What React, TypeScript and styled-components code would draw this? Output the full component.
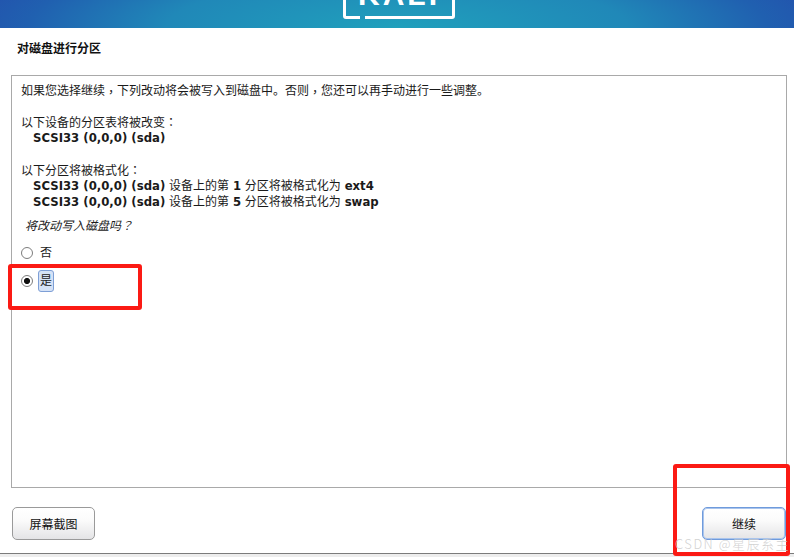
import styled, { createGlobalStyle } from "styled-components";

const GlobalStyle = createGlobalStyle`
  html, body {
    margin: 0;
    padding: 0;
    background: #fff;
  }
  body {
    font-family: "DejaVu Sans", "Noto Sans CJK SC", sans-serif;
    font-size: 12px;
    color: #1a1a1a;
  }
`;

const Page = styled.div`
  position: relative;
  width: 794px;
  height: 557px;
  overflow: hidden;
  display: flex;
  flex-direction: column;
  background: #fff;
`;

const Banner = styled.header`
  flex: none;
  height: 28px;
  display: flex;
  justify-content: center;
  align-items: flex-end;
  overflow: hidden;
  background: radial-gradient(ellipse 420px 90px at 50% 100%, #20a0bc 0%, #2088b8 55%, #2060b0 88%, #2256ae 100%);
`;

const LogoFrame = styled.div`
  position: relative;
  width: 112px;
  height: 40px;
  flex: none;
  margin-bottom: 9px;
  margin-left: 4px;
  box-sizing: border-box;
  border: 3px solid #fff;
  border-radius: 3px;
  display: flex;
  justify-content: center;
  align-items: flex-end;
  color: #fff;
  font-family: "Liberation Sans", sans-serif;
  font-size: 30px;
  font-weight: 700;
  line-height: 30px;
  letter-spacing: 3px;
  padding-bottom: 6px;

  &::after {
    content: "";
    position: absolute;
    left: 14px;
    bottom: -3px;
    width: 5px;
    height: 3px;
    background: #2196bb;
  }
`;

const Title = styled.h1`
  flex: none;
  margin: 0;
  height: 47px;
  padding: 13px 0 0 17px;
  box-sizing: border-box;
  font-size: 12px;
  line-height: 16px;
  font-weight: 700;
  color: #111;
`;

const Panel = styled.section`
  flex: none;
  height: 413px;
  margin: 0 7px 0 11px;
  box-sizing: border-box;
  border: 1px solid #a9a9a9;
  padding: 6px 9px;
`;

const Line = styled.div<{ $gap?: number; $indent?: boolean }>`
  height: 16px;
  line-height: 16px;
  white-space: pre;
  margin-top: ${(p) => p.$gap ?? 0}px;
  padding-left: ${(p) => (p.$indent ? 12 : 0)}px;
`;

const Strong = styled.b`
  font-weight: 700;
  font-size: 11.7px;
`;

// the installer's CJK font centres its full-width punctuation in the cell
const Punct = styled.span<{ $drop?: number }>`
  font-family: "Noto Sans CJK TC", sans-serif;
  position: relative;
  top: ${(p) => p.$drop ?? 0}px;
`;

const Question = styled.div`
  height: 16px;
  line-height: 16px;
  margin-top: 7px;
  padding-left: 4px;
  font-style: italic;
`;

const Option = styled.label`
  display: flex;
  align-items: center;
  gap: 5px;
  height: 22px;
`;

const OptionList = styled.div`
  display: flex;
  flex-direction: column;
  gap: 6px;
  margin-top: 9px;
`;

const Radio = styled.span<{ $checked?: boolean }>`
  width: 12px;
  height: 12px;
  flex: none;
  box-sizing: border-box;
  border-radius: 50%;
  border: 1px solid #7d7d7d;
  background: ${(p) => (p.$checked ? "radial-gradient(circle, #111 0 2.7px, #fff 3.4px)" : "#fff")};
`;

const OptionLabel = styled.span<{ $focused?: boolean }>`
  padding: 1px;
  line-height: 18px;
  border-radius: 3px;
  border: 1px solid ${(p) => (p.$focused ? "#7e9fd6" : "transparent")};
  background: ${(p) => (p.$focused ? "#d5e2f6" : "transparent")};
`;

const Footer = styled.footer`
  flex: none;
  height: 65px;
  padding: 19px 8px 0 12px;
  box-sizing: border-box;
  display: flex;
  justify-content: space-between;
  align-items: flex-start;
`;

const Button = styled.button<{ $primary?: boolean }>`
  width: ${(p) => (p.$primary ? 84 : 83)}px;
  height: 33px;
  padding: 0;
  border-radius: 5px;
  border: 1px solid ${(p) => (p.$primary ? "#6f9bdc" : "#9a9a9a")};
  box-shadow: ${(p) => (p.$primary ? "inset 0 0 0 1px #a9c4ec" : "none")};
  background: linear-gradient(#ffffff 0%, #fbfbfb 40%, #e4e4e6 100%);
  font: inherit;
  color: #111;
`;

const BottomEdge = styled.div`
  flex: none;
  height: 4px;
  border-top: 1px solid #7b7b7b;
  background: #ededed;
`;

const Highlight = styled.div<{ $x: number; $y: number; $w: number; $h: number }>`
  position: absolute;
  left: ${(p) => p.$x}px;
  top: ${(p) => p.$y}px;
  width: ${(p) => p.$w}px;
  height: ${(p) => p.$h}px;
  box-sizing: border-box;
  border: 4px solid #fb1a14;
  border-radius: 3px;
  pointer-events: none;
`;

const Watermark = styled.div`
  position: absolute;
  left: 675px;
  top: 535px;
  font-family: "Noto Sans CJK SC", sans-serif;
  font-weight: 300;
  font-size: 13px;
  line-height: 18px;
  letter-spacing: 1.5px;
  color: rgba(205, 205, 205, 0.9);
  white-space: nowrap;
`;

export default function App() {
  return (
    <Page>
      <GlobalStyle />
      <Banner>
        <LogoFrame>KALI</LogoFrame>
      </Banner>
      <Title>对磁盘进行分区</Title>
      <Panel>
        <Line>
          如果您选择继续<Punct $drop={2}>，</Punct>下列改动将会被写入到磁盘中。否则<Punct $drop={2}>，</Punct>
          您还可以再手动进行一些调整。
        </Line>
        <Line $gap={16}>
          以下设备的分区表将被改变<Punct>：</Punct>
        </Line>
        <Line $indent>
          <Strong>SCSI33 (0,0,0) (sda)</Strong>
        </Line>
        <Line $gap={16}>
          以下分区将被格式化<Punct>：</Punct>
        </Line>
        <Line $indent>
          <Strong>SCSI33 (0,0,0) (sda)</Strong> 设备上的第 <Strong>1</Strong> 分区将被格式化为 <Strong>ext4</Strong>
        </Line>
        <Line $indent>
          <Strong>SCSI33 (0,0,0) (sda)</Strong> 设备上的第 <Strong>5</Strong> 分区将被格式化为 <Strong>swap</Strong>
        </Line>
        <Question>
          将改动写入磁盘吗<Punct>？</Punct>
        </Question>
        <OptionList>
          <Option>
            <Radio />
            <OptionLabel>否</OptionLabel>
          </Option>
          <Option>
            <Radio $checked />
            <OptionLabel $focused>是</OptionLabel>
          </Option>
        </OptionList>
      </Panel>
      <Footer>
        <Button>屏幕截图</Button>
        <Button $primary>继续</Button>
      </Footer>
      <BottomEdge />
      <Highlight $x={8} $y={264} $w={134} $h={46} />
      <Highlight $x={673} $y={464} $w={117} $h={92} />
      <Watermark>CSDN @星辰系主</Watermark>
    </Page>
  );
}
